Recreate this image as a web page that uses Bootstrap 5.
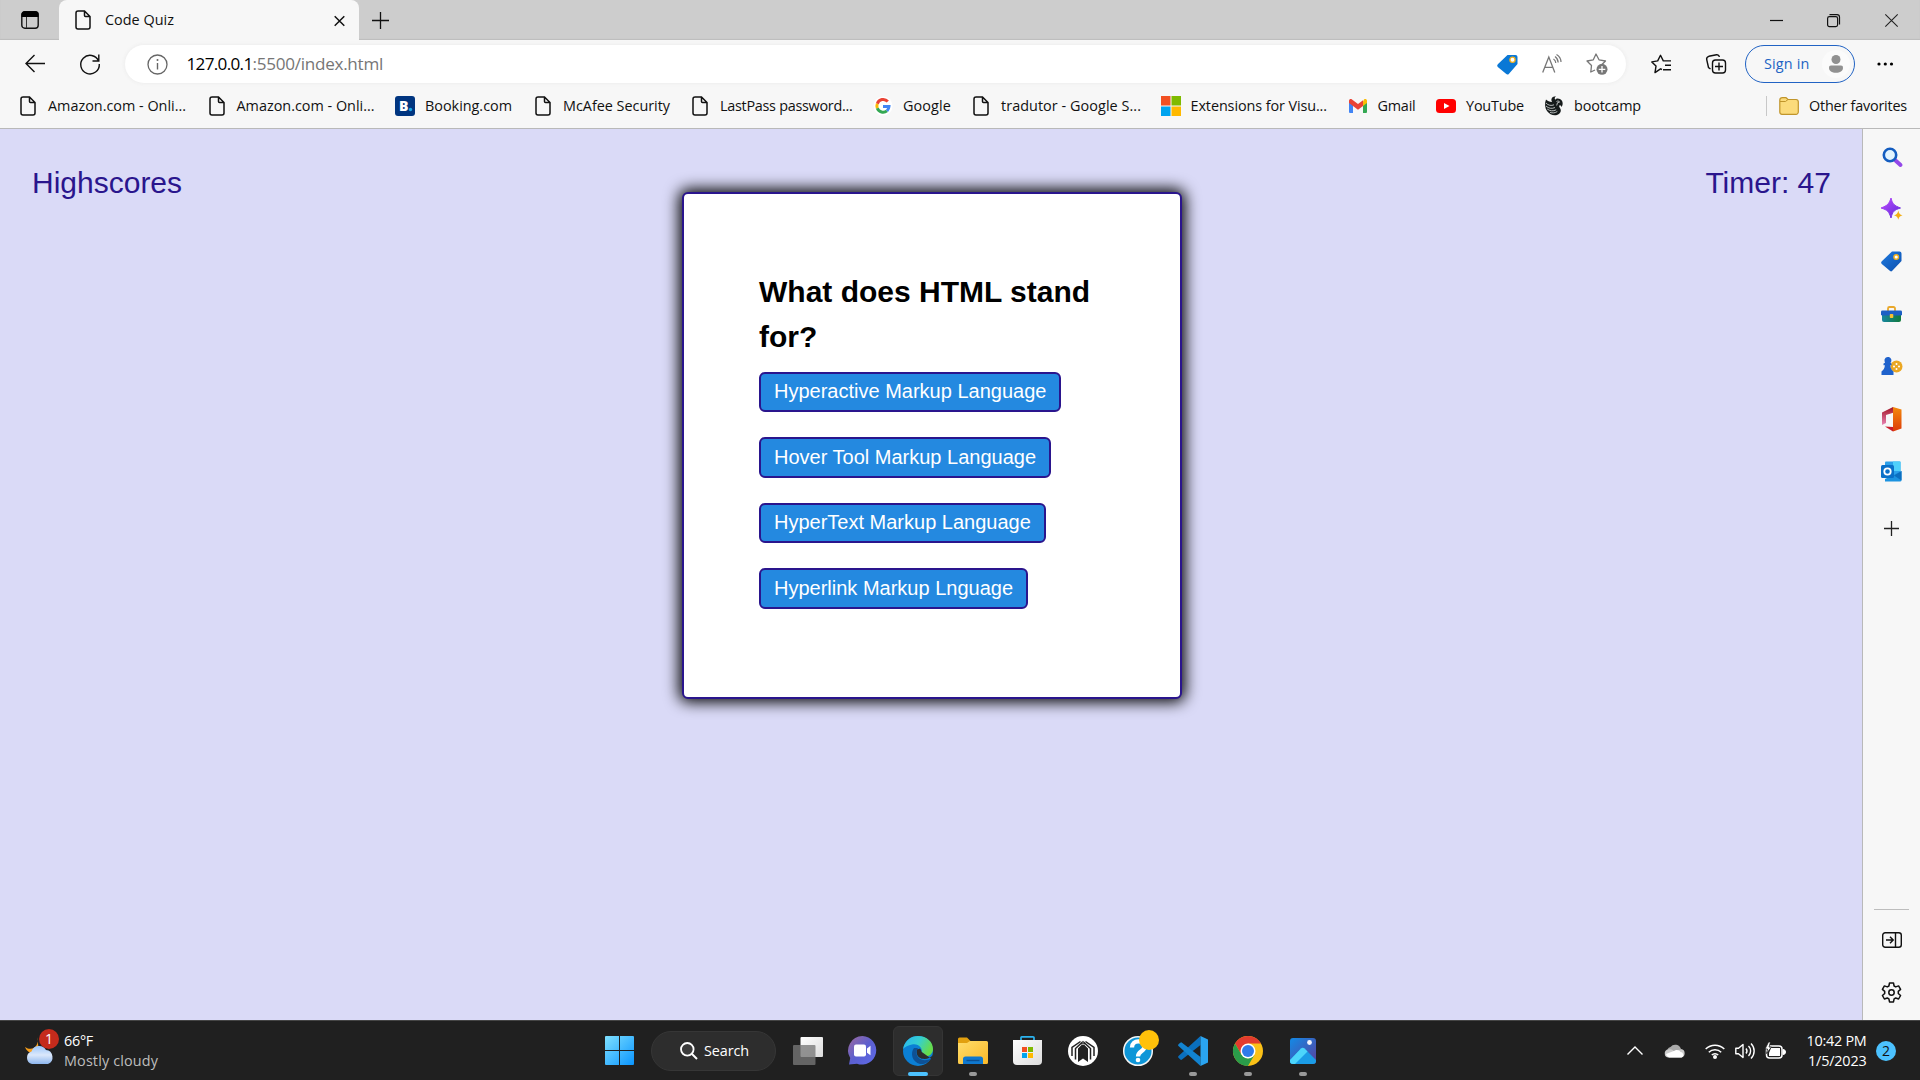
<!DOCTYPE html>
<html lang="en">
<head>
<meta charset="utf-8">
<title>Code Quiz</title>
<link href="https://cdn.jsdelivr.net/npm/bootstrap@5.3.0/dist/css/bootstrap.min.css" rel="stylesheet">
<style>
body{width:1920px;height:1080px;overflow:hidden;background:#f7f7f7;color:#111;font-family:"Open Sans","Noto Sans",sans-serif;font-size:14.4px;line-height:20px}
svg{display:block;flex:none;overflow:visible}
[data-w]{white-space:nowrap;flex:none}
.tabstrip{height:40px;background:#cdcdcd;box-shadow:inset 0 -1px 1px #bdbdbd}
.tabstrip-menu{width:59px}
.page-tab{width:300px;height:40px;background:#f7f7f7;border-radius:8px 8px 0 0;padding:0 14px 0 16px;gap:14px}
.win-btn{width:57.5px}
.toolbar-row{height:48px}
.nav-icons{width:125px;padding-left:25px;gap:35px}
.omnibox{width:1501px;height:38px;border-radius:19px;background:#fff;box-shadow:0 0 4px #e9e9e9;padding:0 18px 0 22px}
.url{font-size:17.1px;color:#767676;padding-left:18.5px}
.signin{width:110px;height:38px;border:1.5px solid #2163c4;border-radius:19px;color:#2163c4;padding:0 4px 0 18px;margin-left:19px}
.avatar-disc{width:28px;height:28px;border-radius:50%;background:#fbfbfb}
.bookmarks{height:41px;padding:0 0 5px 18px;border-bottom:1px solid #b9b9b9}
.bm{flex:none;gap:10px}
.bm-ico{width:20px;flex:none}
.bm-sep{width:1px;height:20px;background:#c8c8c8}
.viewport{height:891px}
.quiz-page{width:1863px;background:#dadaf7;font-family:"Liberation Sans",Arial,sans-serif;padding:31px 31px 0 32px;border-right:1.5px solid #b9b9b9}
.corner-label{font-size:30px;line-height:45px;color:#2a158d;width:300px}
.quiz-box{width:500px;height:507px;margin-top:32px;background:#fff;border:2px solid #2a158d;border-radius:6px;box-shadow:0 0 15px 3px #000;padding:75px 75.5px}
.question{font-size:30px;line-height:45px;font-weight:700;color:#000;margin:0 0 12.5px}
.answer{font-size:20px;line-height:30px;color:#fff;background:#2489e0;border:2px solid #2a158d;border-radius:6px;padding:2.5px 13px 4px;height:40.5px;margin-bottom:25px;--bs-btn-font-family:inherit}
.edge-side{width:57px;padding-top:1.5px}
.side-cell{height:52.5px}
.side-rule{width:35px;height:1px;background:#bdbdbd}
.taskbar{height:60px;background:#202020;border-top:1px solid #454545;color:#fff}
.weather{width:590px;padding-left:25px;gap:9px}
.alert-dot{width:20px;height:20px;border-radius:50%;background:#c42b1c;font-size:14px;left:14px;top:-7px}
.muted-line{color:#bdbdbd}
.search-pill{width:125px;height:40px;border-radius:20px;background:#2d2d2d;border:1px solid #363636;padding-left:28px;gap:6px}
.app{width:55px;height:60px}
.app-active{width:50px;height:50px;border-radius:6px;background:#2d2d2d;border:1px solid #353535}
.run-dot{width:8px;height:4px;border-radius:2px;background:#999;bottom:5px;left:24px}
.run-line{width:20px;background:#4cc2ff;left:18px}
.notice{width:20px;height:20px;border-radius:50%;background:#4cc2ff;color:#111;font-size:14px}
</style>
<script src="https://cdn.jsdelivr.net/npm/bootstrap@5.3.0/dist/js/bootstrap.bundle.min.js"></script>
</head>
<body>
<svg width="0" height="0" class="position-absolute">
<defs>
<symbol id="doc" viewBox="0 0 20 20"><path d="M4.500 1H11.500L17 6.500V17a2 2 0 0 1-2 2H5a2 2 0 0 1-2-2V3a2 2 0 0 1 2-2M11.500 1V5.500a1 1 0 0 0 1 1H17" fill="none" stroke="#111" stroke-width="1.500"/></symbol>
<linearGradient id="gBlue" x1="0" y1="0" x2="1" y2="1"><stop stop-color="#1f7be0"/><stop offset="1" stop-color="#0c4fae"/></linearGradient>
<linearGradient id="gWin" x1="0" y1="0" x2="1" y2="1"><stop stop-color="#7fe0ff"/><stop offset="1" stop-color="#0a95ff"/></linearGradient>
<linearGradient id="gPur" x1="0" y1="0" x2="1" y2="1"><stop stop-color="#c04bff"/><stop offset="1" stop-color="#5a2bd8"/></linearGradient>
<linearGradient id="gFold" x1="0" y1="0" x2="1" y2="1"><stop stop-color="#ffdd6b"/><stop offset="1" stop-color="#fbb928"/></linearGradient>
<linearGradient id="gCloud" x1="0" y1="0" x2="0" y2="1"><stop stop-color="#9cc6fb"/><stop offset=".5" stop-color="#dbe8fb"/><stop offset="1" stop-color="#8db6ee"/></linearGradient>
<linearGradient id="gEdge" x1="0" y1="0" x2="1" y2=".4"><stop stop-color="#28b3f2"/><stop offset=".55" stop-color="#35cfd0"/><stop offset="1" stop-color="#66dc4b"/></linearGradient>
<linearGradient id="gChat" x1="0" y1="0" x2="1" y2="1"><stop stop-color="#a06a9c"/><stop offset=".5" stop-color="#5b5fd0"/><stop offset="1" stop-color="#5f6bea"/></linearGradient>
<linearGradient id="gPhoto" x1="0" y1="0" x2="1" y2="1"><stop stop-color="#128ae6"/><stop offset="1" stop-color="#5b3f9c"/></linearGradient>
<linearGradient id="gOff" x1="0" y1="0" x2="0" y2="1"><stop stop-color="#a31424"/><stop offset="1" stop-color="#e884b4"/></linearGradient>
<linearGradient id="gOff2" x1="0" y1="0" x2="0" y2="1"><stop stop-color="#f48a0c"/><stop offset="1" stop-color="#dc3a08"/></linearGradient>
<linearGradient id="gTool" x1="0" y1="0" x2="1" y2="0"><stop stop-color="#1786a0"/><stop offset="1" stop-color="#117a3b"/></linearGradient>
<linearGradient id="gPane" x1="0" y1="0" x2="1" y2="1"><stop stop-color="#fff"/><stop offset="1" stop-color="#dcdcdc"/></linearGradient>
</defs>
</svg>

<header>
<div class="tabstrip d-flex align-items-center">
 <div class="tabstrip-menu d-flex justify-content-center"><svg width="18" height="18" viewBox="0 0 18 18"><rect x=".8" y=".8" width="16.400" height="16.400" rx="3" fill="none" stroke="#111" stroke-width="1.400"/><path d="M.5 6V3a3 3 0 0 1 3-2.700h11a3 3 0 0 1 3 2.700V6Z" fill="#000"/><path d="M5.500 6v11" stroke="#333"/></svg></div>
 <div class="page-tab d-flex align-items-center">
  <svg width="16" height="20" viewBox="2 0 16 20"><use href="#doc" width="20" height="20"/></svg>
  <span class="me-auto" data-w="69">Code Quiz</span>
  <svg width="11" height="11"><path d="M.7 1.200 10.300 10.800M10.300 1.200.7 10.800" stroke="#111" stroke-width="1.500"/></svg>
 </div>
 <svg class="ms-2 me-auto" width="26" height="18"><path d="M5 9.500h17M13.500 1v17" stroke="#111" stroke-width="1.300"/></svg>
 <div class="win-btn d-flex justify-content-center"><svg width="13" height="13"><path d="M0 6.500H13" stroke="#111" stroke-width="1.200"/></svg></div>
 <div class="win-btn d-flex justify-content-center"><svg width="13" height="13"><rect x=".6" y="2.600" width="10" height="10" rx="1.800" fill="none" stroke="#111" stroke-width="1.200"/><path d="M2.500 .6h7.500a2.500 2.500 0 0 1 2.500 2.500v7.500" fill="none" stroke="#111" stroke-width="1.200"/></svg></div>
 <div class="win-btn d-flex justify-content-center"><svg width="13" height="13"><path d="M.3 .3 12.700 12.700M12.700 .3.3 12.700" stroke="#222" stroke-width="1.100"/></svg></div>
</div>

<div class="toolbar-row d-flex align-items-center">
 <div class="nav-icons d-flex align-items-center">
  <svg width="20" height="18"><path d="M20 8.500H1M9.500 0 1 8.500 9.500 17" fill="none" stroke="#111" stroke-width="1.400"/></svg>
  <svg width="20" height="20"><path d="M18.600 7A9.300 9.300 0 1 0 19.300 10M18.800 .5V7H12.500" fill="none" stroke="#111" stroke-width="1.400"/></svg>
 </div>
 <div class="omnibox d-flex align-items-center">
  <svg width="21" height="21" viewBox="0 0 21 21"><circle cx="10.500" cy="10.500" r="9.500" fill="none" stroke="#666" stroke-width="1.300"/><path d="M10.500 9v6.500" stroke="#666" stroke-width="1.400"/><circle cx="10.500" cy="6" r="1" fill="#666"/></svg>
  <span class="url me-auto"><span class="text-black" data-w="66">127.0.0.1</span><span data-w="130.500">:5500/index.html</span></span>
  <div class="d-flex align-items-center" style="gap:24px">
   <svg width="21" height="21" viewBox="0 0 21 21"><path d="M10.500 1h8a2 2 0 0 1 2 2v7l-8.500 9.700a2 2 0 0 1-3 .1L.8 13a2 2 0 0 1 0-2.800Z" fill="#0a78d6"/><circle cx="15.500" cy="5.700" r="2.600" fill="#fff" stroke="#f3b01b" stroke-width="1.300"/></svg>
   <svg width="20" height="20" viewBox="0 0 20 20"><path d="M.7 18.500 6.800 3l6 15.500M2.700 13.300h8.200" fill="none" stroke="#777" stroke-width="1.300"/><path d="M11.500 5a5 5 0 0 1 2.300 4M13 2.500a8 8 0 0 1 3.200 6M14.500.5a9 9 0 0 1 4.500 7.500" fill="none" stroke="#777" stroke-width="1.200"/></svg>
   <svg width="22" height="22" viewBox="0 0 22 22"><path d="M9 17 4.800 19l.7-6.500L1 8l6.300-1.200L10 1l3 5.800L19.500 8l-3.300 3.300" fill="none" stroke="#777" stroke-width="1.300" stroke-linejoin="round"/><circle cx="16" cy="16.300" r="5.500" fill="#777"/><path d="M12.700 16.300h6.600M16 13v6.600" stroke="#fff" stroke-width="1.300"/></svg>
  </div>
 </div>
 <svg style="margin-left:25px" width="20" height="20" viewBox="0 0 20 20"><path d="M11 15.500 9.500 14.800 4 18.600l1-6.500L.8 7.900l5.900-1L9.500 1.300l2.800 5.600H20M14 11.300h6M12 15.800h8" fill="none" stroke="#111" stroke-width="1.400" stroke-linejoin="round"/></svg>
 <svg style="margin-left:35px" width="20" height="20" viewBox="0 0 20 20"><path d="M4.500 15 2.500 13.500.8 6a3 3 0 0 1 2-3.700L10.500.7A2.500 2.500 0 0 1 13.300 3" fill="none" stroke="#111" stroke-width="1.400"/><rect x="6.500" y="6" width="13" height="13" rx="3" fill="#f7f7f7" stroke="#111" stroke-width="1.400"/><path d="M9 12.500h8M13 8.500v8" stroke="#111" stroke-width="1.400"/></svg>
 <div class="signin d-flex align-items-center justify-content-between"><span data-w="45.500">Sign in</span>
  <div class="avatar-disc d-flex align-items-center justify-content-center"><svg width="14" height="18"><circle cx="7" cy="4.500" r="4.500" fill="#919191"/><path d="M2 10.500h10a2 2 0 0 1 2 2.200c0 3.300-3 5-7 5s-7-1.700-7-5a2 2 0 0 1 2-2.200Z" fill="#919191"/></svg></div></div>
 <svg style="margin-left:21px" width="18" height="4"><circle cx="3" cy="2" r="1.600"/><circle cx="9.300" cy="2" r="1.600"/><circle cx="15.500" cy="2" r="1.600"/></svg>
</div>

<nav class="bookmarks d-flex align-items-center">
 <div class="bm d-flex align-items-center" style="width:188.500px"><svg class="bm-ico" height="20"><use href="#doc"/></svg><span data-w="138">Amazon.com - Onli...</span></div>
 <div class="bm d-flex align-items-center" style="width:188.500px"><svg class="bm-ico" height="20"><use href="#doc"/></svg><span data-w="138">Amazon.com - Onli...</span></div>
 <div class="bm d-flex align-items-center" style="width:138px"><svg class="bm-ico" height="20"><rect width="20" height="20" rx="3" fill="#003580"/><text x="4" y="15" font-size="14" font-weight="800" fill="#fff">B</text><circle cx="15.500" cy="13.500" r="1.700" fill="#1aa8e8"/></svg><span data-w="87">Booking.com</span></div>
 <div class="bm d-flex align-items-center" style="width:157px"><svg class="bm-ico" height="20"><use href="#doc"/></svg><span data-w="107">McAfee Security</span></div>
 <div class="bm d-flex align-items-center" style="width:183px"><svg class="bm-ico" height="20"><use href="#doc"/></svg><span data-w="132.500">LastPass password...</span></div>
 <div class="bm d-flex align-items-center" style="width:98px"><svg class="bm-ico" height="20" viewBox="0 0 20 20"><circle cx="10" cy="10" r="9.500" fill="#fff"/><g fill="none" stroke-width="3"><path d="M14.800 5.500A6.200 6.200 0 0 0 4.300 7.700" stroke="#ea4335"/><path d="M4.300 7.700a6.200 6.200 0 0 0 0 4.600" stroke="#fbbc05"/><path d="M4.300 12.300a6.200 6.200 0 0 0 9.700 2.500" stroke="#34a853"/><path d="M14 14.800a6.500 6.500 0 0 0 2-4.300H10" stroke="#4285f4"/></g></svg><span data-w="48">Google</span></div>
 <div class="bm d-flex align-items-center" style="width:189.500px"><svg class="bm-ico" height="20"><use href="#doc"/></svg><span data-w="140">tradutor - Google S...</span></div>
 <div class="bm d-flex align-items-center" style="width:187px"><svg class="bm-ico" height="20"><path d="M0 0H9.500V9.500H0Z" fill="#f25022"/><path d="M10.500 0H20v9.500h-9.500Z" fill="#7fba00"/><path d="M0 10.500h9.500V20H0Z" fill="#00a4ef"/><path d="M10.500 10.500H20V20h-9.500Z" fill="#ffb900"/></svg><span data-w="136.500">Extensions for Visu...</span></div>
 <div class="bm d-flex align-items-center" style="width:88.500px"><svg class="bm-ico" height="20"><path d="M1 5v11a1 1 0 0 0 1 1h3V8Z" fill="#4285f4"/><path d="M19 5v11a1 1 0 0 1-1 1h-3V8Z" fill="#34a853"/><path d="M15 5.500V10l4-3V5c0-2-2-2.500-3-1.500Z" fill="#fbbc04"/><path d="M1 5c0-2 2-2.500 3-1.500l6 4.500 5-3.700V10l-5 3.700L1 7Z" fill="#ea4335"/></svg><span data-w="38">Gmail</span></div>
 <div class="bm d-flex align-items-center" style="width:108px"><svg class="bm-ico" height="20"><rect y="3" width="20" height="14" rx="3.500" fill="#f00"/><path d="M8 7l5.500 3L8 13Z" fill="#fff"/></svg><span data-w="58">YouTube</span></div>
 <div class="bm d-flex align-items-center me-auto"><svg class="bm-ico" height="20" viewBox="0 0 20 20"><path d="M12 .3C8 .5 6.500 3 8 6 5.500 6 3.500 5 2 3.500 .5 7 .8 12 3 15c2.500 3.500 6.500 5 10 4 3-1 4.500-3.500 3.500-6-.4-1.300-1.500-2-1.300-3.300.3-1 1.800-.7 2.300 1.300C19.500 8.500 19 4.500 16 3c-2-1-4-.5-4.800.8C10.300 2.500 10.800 1.200 12 .3Z" fill="#161b1b"/><path d="M2 7c2 2.500 5.500 3 8 1.800M2 10c2.500 2.500 6 3 9 1.500M3.200 13c2.500 2 6 2.500 9 .8M6 16.300c2.500 1 5 .8 7.300-.8M12.500 5.500c1.300-.8 2.500-.5 3.200.6l-2.200.6-.8 2.800" fill="none" stroke="#dfe3e3" stroke-width=".8"/></svg><span data-w="67">bootcamp</span></div>
 <div class="bm-sep"></div>
 <div class="bm d-flex align-items-center" style="margin:0 13px 0 12px"><svg class="bm-ico" height="20"><path d="M.8 4A2.500 2.500 0 0 1 3.300 1.700H7L9 3.500h8a2.300 2.300 0 0 1 2.300 2.300V16A2.300 2.300 0 0 1 17 18.300H3A2.300 2.300 0 0 1 .8 16Z" fill="#fbdb7b" stroke="#c0952b" stroke-width="1.200"/><path d="M1 5.500h5.500L9 3.500" fill="none" stroke="#c0952b"/></svg><span data-w="98">Other favorites</span></div>
</nav>
</header>

<div class="viewport d-flex">
<main class="quiz-page d-flex justify-content-between align-items-start">
 <div class="corner-label">Highscores</div>
 <section class="quiz-box d-flex flex-column align-items-start">
  <h1 class="question">What does HTML stand for?</h1>
  <button class="btn answer">Hyperactive Markup Language</button>
  <button class="btn answer">Hover Tool Markup Language</button>
  <button class="btn answer">HyperText Markup Language</button>
  <button class="btn answer">Hyperlink Markup Lnguage</button>
 </section>
 <div class="corner-label text-end">Timer: 47</div>
</main>
<aside class="edge-side d-flex flex-column align-items-center">
 <div class="side-cell d-flex align-items-center"><svg width="20" height="20"><path d="M13 13l5.500 5" stroke="#9448e8" stroke-width="4" stroke-linecap="round"/><circle cx="8" cy="8" r="6.200" fill="#e2f4ff" stroke="#145dc0" stroke-width="2.600"/></svg></div>
 <div class="side-cell d-flex align-items-center"><svg width="21" height="22"><path d="M10 0c1.500 6 3 7.500 9.500 10C13 12 11.500 13.500 10 20 8 13.500 6.500 12 0 10 6.500 7.500 8 6 10 0Z" fill="url(#gPur)" stroke="url(#gPur)" stroke-width="1" stroke-linejoin="round"/><path d="M17.300 12.500c.7 3 1.500 4 4.200 4.800-2.700.8-3.500 1.700-4.200 4.500-.7-2.800-1.600-3.700-4.300-4.500 2.700-.8 3.600-1.800 4.300-4.800Z" fill="#f2ae14"/></svg></div>
 <div class="side-cell d-flex align-items-center"><svg width="21" height="21"><path d="M11 .5h7.500a2 2 0 0 1 2 2V10l-9 9.500a2 2 0 0 1-3 .1L.8 13a2 2 0 0 1 0-2.800Z" fill="url(#gBlue)"/><circle cx="15.200" cy="6" r="2.300" fill="#fff" stroke="#f3b01b" stroke-width="1.400"/></svg></div>
 <div class="side-cell d-flex align-items-center"><svg width="21" height="16" viewBox="0 0 21 16"><path d="M7 5V2.500A1.500 1.500 0 0 1 8.500 1h4A1.500 1.500 0 0 1 14 2.500V5" fill="none" stroke="#e9a82b" stroke-width="1.800"/><path d="M1 8h19v6a2 2 0 0 1-2 2H3a2 2 0 0 1-2-2Z" fill="url(#gTool)"/><rect y="4.500" width="21" height="5" rx="1.300" fill="#1c5fc4"/><rect x="8.800" y="8" width="3.500" height="4" rx=".8" fill="#f8bf30"/></svg></div>
 <div class="side-cell d-flex align-items-center"><svg width="22" height="19"><circle cx="15.500" cy="9.500" r="6" fill="#eba722"/><g fill="#fff"><circle cx="13" cy="9.500" r="1"/><circle cx="18" cy="9.500" r="1"/><circle cx="15.500" cy="7" r="1"/><circle cx="15.500" cy="12" r="1"/></g><path d="M3.500 4a3.500 3.500 0 1 1 6 1.800l1 .7v1.700H9.300c.2 3 1 4.500 3.200 6.300V18H.5v-3.500C2.500 13 3.700 11 3.900 8.200H2.500V6.500l1.500-.7Z" fill="#1f62cc"/></svg></div>
 <div class="side-cell d-flex align-items-center"><svg width="21" height="25"><path d="M12 0 1 5.500V18l4-2V8l8-2.500Z" fill="url(#gOff)"/><path d="M12 0l8.500 2.500v19L12 24.500V5.500Z" fill="url(#gOff2)"/><path d="M4 19.500l8 .5v4.500Z" fill="#c91c2b"/></svg></div>
 <div class="side-cell d-flex align-items-center"><svg width="21" height="21"><rect x="4" y=".5" width="15.500" height="14" rx="1" fill="#2ba0ea"/><path d="M12 .5h7.500V10H12Z" fill="#4fd0fb"/><path d="M4 20.500h15a1.500 1.500 0 0 0 1.500-1.500V10L4 18Z" fill="#1c93e0"/><path d="M20.500 10v9.500L13 14.500Z" fill="#0c6fc0"/><rect y="4" width="13" height="13" rx="1.500" fill="#0a70c8"/><circle cx="6.500" cy="10.500" r="3.200" fill="none" stroke="#fff" stroke-width="1.800"/></svg></div>
 <div class="side-cell d-flex align-items-center pt-2"><svg width="15" height="15"><path d="M0 7.500H15M7.500 0V15" stroke="#222" stroke-width="1.300"/></svg></div>
 <div class="side-rule mt-auto"></div>
 <div class="d-flex align-items-center" style="height:59px"><svg width="20" height="16"><rect x=".7" y=".7" width="18.600" height="14.600" rx="2.500" fill="none" stroke="#111" stroke-width="1.400"/><path d="M13.500 0v16M4 8h7M8 4.800 11.200 8 8 11.200" fill="none" stroke="#111" stroke-width="1.400"/></svg></div>
 <div class="d-flex align-items-center" style="height:46px;margin-bottom:5px"><svg width="21" height="21" viewBox="0 0 21 21"><path d="M8.500 1h4l.6 3 1.600.9 2.900-1 2 3.500-2.300 2v2.100l2.300 2-2 3.500-2.900-1-1.600.9-.6 3h-4l-.6-3-1.600-.9-2.900 1-2-3.500 2.300-2V9.400l-2.300-2 2-3.500 2.900 1L7.900 4Z" fill="none" stroke="#111" stroke-width="1.500" stroke-linejoin="round"/><circle cx="10.500" cy="10.500" r="2.700" fill="none" stroke="#111" stroke-width="1.500"/></svg></div>
</aside>
</div>

<footer class="taskbar d-flex align-items-center">
 <div class="weather d-flex align-items-center">
  <div class="position-relative"><svg width="30" height="30"><path d="M12 1c3 9-5 15-12 10 2 6 9 8 14 4Z" fill="#f9a01c"/><path d="M7 28a6.500 6.500 0 0 1-.5-12.500A8 8 0 0 1 21 14 7.300 7.300 0 0 1 23 28Z" fill="url(#gCloud)"/></svg><span class="alert-dot position-absolute d-flex align-items-center justify-content-center">1</span></div>
  <div><div class="d-table" data-w="29">66°F</div><div class="muted-line d-table" data-w="94">Mostly cloudy</div></div>
 </div>
 <svg style="margin-left:15px;margin-right:17px" width="29" height="29"><path d="M0 1a1 1 0 0 1 1-1H14V14H0ZM15 0H28a1 1 0 0 1 1 1V14H15ZM0 15H14V29H1a1 1 0 0 1-1-1ZM15 15H29V28a1 1 0 0 1-1 1H15Z" fill="url(#gWin)"/></svg>
 <div class="search-pill d-flex align-items-center"><svg width="18" height="18"><circle cx="7.300" cy="7.300" r="6.300" fill="#3b3b3b" stroke="#fff" stroke-width="1.800"/><path d="M12 12l5 5" stroke="#fff" stroke-width="2"/></svg><span data-w="45">Search</span></div>
 <div class="d-flex" style="margin-left:4px">
  <div class="app d-flex align-items-center justify-content-center"><svg width="30" height="28"><rect x="7.500" width="22.500" height="20" rx="1" fill="url(#gPane)"/><rect y="8" width="22.500" height="20" rx="1" fill="#777" opacity=".78"/></svg></div>
  <div class="app d-flex align-items-center justify-content-center"><svg width="29" height="29"><path d="M14.500 0A14.300 14.300 0 1 1 9 27.700L1 28.500 2.200 22A14.500 14.500 0 0 1 14.500 0Z" fill="url(#gChat)"/><rect x="6" y="8.500" width="12" height="12" rx="2" fill="#fff"/><path d="M19 12.500l3.500-2.800v9.600L19 16.700Z" fill="#fff"/></svg></div>
  <div class="app position-relative d-flex align-items-center justify-content-center"><div class="app-active d-flex align-items-center justify-content-center"><svg width="30" height="30" viewBox="0 0 30 30"><circle cx="15" cy="15" r="15" fill="#0b7fd4"/><path d="M0 13C2 4 8 0 15 0c9 0 15 6 15 13 0 5-4 7.500-8 7.500-3 0-5-1-4-2.500 3-6-3-11-9-9.500C5 9.300 2 11 0 13Z" fill="url(#gEdge)"/><path d="M11 12c-4 5-2 14 6 16 5 .5 9-2 11.500-6-4 3-10 3-13-.5-2-2-3-6-.5-9.500Z" fill="#0e5195"/><path d="M14.500 13c-2 4 0 8 4 9.500 4 1 8 .2 11-3l1 3-1.500 1.500-1-1.500" fill="#2d2d2d"/><path d="M15 13.500c2-2 4.500 1 3 4.500-.8 1.500 1 2.500 4 2.500l-3 2c-4-1-6-5-4-9Z" fill="#2d2d2d"/></svg></div><span class="run-dot run-line position-absolute"></span></div>
  <div class="app position-relative d-flex align-items-center justify-content-center"><svg width="30" height="27"><path d="M0 6V2A1.500 1.500 0 0 1 1.500.5H9L12.500 4V8H0Z" fill="#e2a00f"/><path d="M0 6h9l3-2h16.500A1.500 1.500 0 0 1 30 5.500V25.500A1.500 1.500 0 0 1 28.500 27h-27A1.500 1.500 0 0 1 0 25.500Z" fill="url(#gFold)"/><path d="M5 27V22a2.500 2.500 0 0 1 2.500-2.500h15A2.500 2.500 0 0 1 25 22v5Z" fill="#0f78cf"/><path d="M8.500 23.500h13" stroke="#0b4f93" stroke-width="1.400"/></svg><span class="run-dot position-absolute"></span></div>
  <div class="app d-flex align-items-center justify-content-center"><svg width="29" height="29"><path d="M8 5V1.500A1 1 0 0 1 9 .8H20a1 1 0 0 1 1 1V5" fill="none" stroke="#2bb4f0" stroke-width="1.700"/><path d="M0 4H29V25a4 4 0 0 1-4 4H4a4 4 0 0 1-4-4Z" fill="url(#gPane)"/><path d="M9 11h5v5H9Z" fill="#f25022"/><path d="M15 11h5v5h-5Z" fill="#7fba00"/><path d="M9 17h5v5H9Z" fill="#00a4ef"/><path d="M15 17h5v5h-5Z" fill="#ffb900"/></svg></div>
  <div class="app d-flex align-items-center justify-content-center"><svg width="30" height="30"><circle cx="15" cy="15" r="15" fill="#fff"/><path d="M4 20V11.500L12.500 5.500M26 20V11.500L17.500 5.500" fill="none" stroke="#222" stroke-width="1.500"/><path d="M7.500 23.500V12.500L14 6.500V8.500M22.500 23.500V12.500L16 6.500V8.500" fill="none" stroke="#222" stroke-width="1.500"/><path d="M10 26V12.500L13.500 9h3L20 12.500V26L15 22.500Z" fill="#222"/></svg></div>
  <div class="app d-flex align-items-center justify-content-center"><svg width="30" height="30"><circle cx="15" cy="15" r="14.300" fill="#0e96d8" stroke="#f4f4f4" stroke-width="1.500"/><path d="M9 11.500C9 3.500 21.500 3.500 21.500 10.500c0 5-6.500 4.500-6.500 10" fill="none" stroke="#fff" stroke-width="4.300"/><circle cx="15" cy="24" r="2.300" fill="#fff"/><circle cx="26" cy="4" r="10" fill="#ffc10a"/></svg></div>
  <div class="app position-relative d-flex align-items-center justify-content-center"><svg width="30" height="30"><path d="M22.500 0v9L4 23.500a1.200 1.200 0 0 1-1.700 0L.5 21.800a1.200 1.200 0 0 1 0-1.800Z" fill="#0a6fbe"/><path d="M22.500 30v-9L4 6.800a1.200 1.200 0 0 0-1.700 0L.5 8.300a1.200 1.200 0 0 0 0 1.800Z" fill="#1283d0"/><path d="M22.500 0 30 3.500v23L22.500 30Z" fill="#2aa4f0"/></svg><span class="run-dot position-absolute"></span></div>
  <div class="app position-relative d-flex align-items-center justify-content-center"><svg width="30" height="30"><circle cx="15" cy="15" r="15" fill="#fbc117"/><path d="M2 7.500a15 15 0 0 1 26 0H15L8.500 18.700Z" fill="#e33b2e"/><path d="M2 7.500 8.500 18.700 15 22.500l6.500-3.800L15 30A15 15 0 0 1 2 7.500Z" fill="#2a9c4a"/><circle cx="15" cy="15" r="7.500" fill="#fff"/><circle cx="15" cy="15" r="6" fill="#2f7bea"/></svg><span class="run-dot position-absolute"></span></div>
  <div class="app position-relative d-flex align-items-center justify-content-center"><svg width="26" height="26"><rect width="26" height="26" rx="3" fill="url(#gPhoto)"/><path d="M0 22 11 10.500a2.500 2.500 0 0 1 3.500 0L26 22v1a3 3 0 0 1-3 3H3a3 3 0 0 1-3-3Z" fill="#1b9ce6"/><path d="M0 22 11 10.500a2.500 2.500 0 0 1 3.500 0l3 3L5 26H3a3 3 0 0 1-3-3Z" fill="#4cd5fb"/><circle cx="19.500" cy="4.500" r="2.400" fill="#f2f4fc"/></svg><span class="run-dot position-absolute"></span></div>
 </div>
 <div class="d-flex align-items-center ms-auto">
  <svg width="16" height="9"><path d="M.5 8.500 8 1l7.500 7.500" fill="none" stroke="#fff" stroke-width="1.400"/></svg>
  <svg style="margin-left:22px" width="20" height="14"><path d="M2 9a5 5 0 0 1 3.500-6A6 6 0 0 1 16 5L8 10Z" fill="#aaa"/><path d="M4 13.500a4 4 0 0 1-.5-8C6 4.500 8 6 9.500 7.500L16 5a4.300 4.300 0 0 1 0 8.500Z" fill="#ccc"/><path d="M4 13.500a4 4 0 0 1-3-3.500l9-3.500c2-1 5 0 5.500 1.500A3 3 0 0 1 17 13.500Z" fill="#fff"/></svg>
  <svg style="margin-left:20px" width="20" height="16"><g fill="none" stroke="#fff" stroke-width="1.500"><path d="M.7 6a13.200 13.200 0 0 1 18.600 0"/><path d="M3.800 9.200a8.800 8.800 0 0 1 12.400 0"/><path d="M6.800 12a4.500 4.500 0 0 1 6.400 0"/></g><circle cx="10" cy="14" r="2" fill="#fff"/></svg>
  <svg style="margin-left:10px" width="20" height="18"><path d="M.8 6.300H3.500L8 2.500v13L3.500 11.700H.8Z" fill="none" stroke="#fff" stroke-width="1.400" stroke-linejoin="round"/><path d="M11 6.500a4 4 0 0 1 0 5M13.500 4a7 7 0 0 1 0 10M16 1.500a10.500 10.500 0 0 1 0 15" fill="none" stroke="#fff" stroke-width="1.400"/></svg>
  <svg style="margin-left:10px" width="20" height="18" viewBox="0 0 20 18"><rect x="1.500" y="4" width="15.500" height="12" rx="3" fill="none" stroke="#fff" stroke-width="1.500"/><path d="M6 6h9v8H4v-3Z" fill="#fff"/><path d="M18 7.500a2 2 0 0 1 0 5Z" fill="#fff" stroke="#fff"/><path d="M3.500 0 0 7H2.500L1.500 11.500 6.500 5H4L5.500 0Z" fill="#fff" stroke="#202020" stroke-width=".8"/></svg>
  <div style="margin-left:22px"><div class="d-table ms-auto" data-w="60">10:42 PM</div><div class="d-table ms-auto" data-w="58.500">1/5/2023</div></div>
  <div class="notice d-flex align-items-center justify-content-center" style="margin:0 24px 0 9.500px">2</div>
 </div>
</footer>
<script>
// Tracks each label so that its run of text fills the width given in data-w.
document.querySelectorAll('[data-w]').forEach(function (el) {
  var w = parseFloat(el.dataset.w), n = el.textContent.length;
  var natural = el.getBoundingClientRect().width;
  el.style.letterSpacing = ((w - natural) / n) + 'px';
});
</script>
</body>
</html>
